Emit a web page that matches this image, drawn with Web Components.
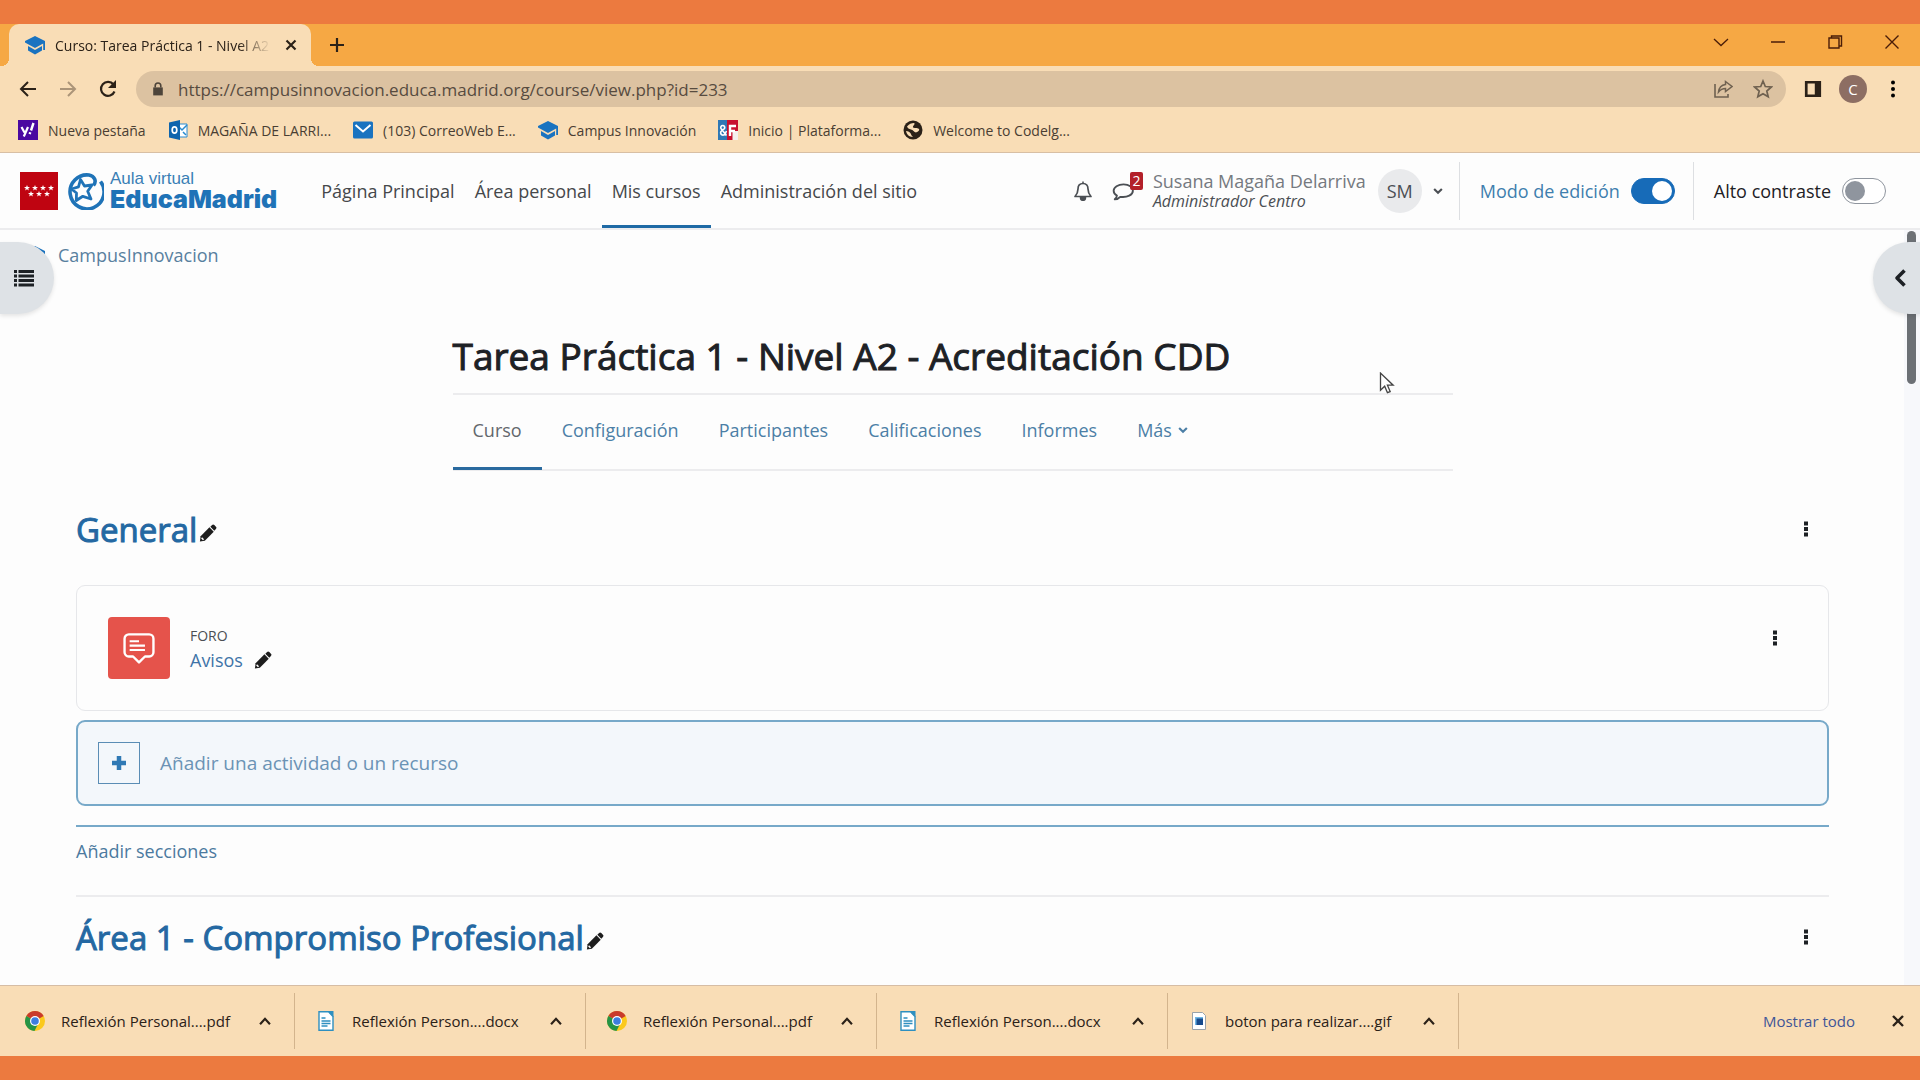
<!DOCTYPE html>
<html lang="es">
<head>
<meta charset="utf-8">
<title>Curso: Tarea Práctica 1 - Nivel A2</title>
<style>
  body {
    margin: 0;
    font-family: "Open Sans", "Noto Sans", sans-serif;
    font-size: 18px;
    color: #1d2125;
  }
</style>
</head>
<body>

<browser-window>
  <browser-tab slot="tabs">Curso: Tarea Práctica 1 - Nivel A2</browser-tab>

  <address-bar slot="toolbar" url="https://campusinnovacion.educa.madrid.org/course/view.php?id=233"></address-bar>

  <bookmark-link slot="bookmarks" icon="yahoo">Nueva pestaña</bookmark-link>
  <bookmark-link slot="bookmarks" icon="outlook">MAGAÑA DE LARRI...</bookmark-link>
  <bookmark-link slot="bookmarks" icon="mail">(103) CorreoWeb E...</bookmark-link>
  <bookmark-link slot="bookmarks" icon="cap">Campus Innovación</bookmark-link>
  <bookmark-link slot="bookmarks" icon="ef">Inicio | Plataforma...</bookmark-link>
  <bookmark-link slot="bookmarks" icon="globe">Welcome to Codelg...</bookmark-link>

  <site-header>
    <nav-link>Página Principal</nav-link>
    <nav-link>Área personal</nav-link>
    <nav-link active>Mis cursos</nav-link>
    <nav-link>Administración del sitio</nav-link>
    <user-menu slot="tools" initials="SM" unread="2">
      Susana Magaña Delarriva
      <span slot="role">Administrador Centro</span>
    </user-menu>
    <toggle-switch slot="tools" checked>Modo de edición</toggle-switch>
    <toggle-switch slot="tools">Alto contraste</toggle-switch>
  </site-header>

  <course-page>
    <course-header>
      Tarea Práctica 1 - Nivel A2 - Acreditación CDD
      <course-tab slot="tabs" active>Curso</course-tab>
      <course-tab slot="tabs">Configuración</course-tab>
      <course-tab slot="tabs">Participantes</course-tab>
      <course-tab slot="tabs">Calificaciones</course-tab>
      <course-tab slot="tabs">Informes</course-tab>
      <course-tab slot="tabs" more>Más</course-tab>
    </course-header>

    <course-section>
      <span slot="title">General</span>
      <activity-card type="Foro">Avisos</activity-card>
      <add-activity>Añadir una actividad o un recurso</add-activity>
      <add-sections>Añadir secciones</add-sections>
    </course-section>
    <course-section divided>
      <span slot="title">Área 1 - Compromiso Profesional</span>
    </course-section>
  </course-page>

  <download-item slot="downloads" icon="chrome">Reflexión Personal....pdf</download-item>
  <download-item slot="downloads" icon="doc">Reflexión Person....docx</download-item>
  <download-item slot="downloads" icon="chrome">Reflexión Personal....pdf</download-item>
  <download-item slot="downloads" icon="doc">Reflexión Person....docx</download-item>
  <download-item slot="downloads" icon="image">boton para realizar....gif</download-item>
</browser-window>

<script>
const icons = {
  cap: '<path fill="#1a73c0" d="M10 1 20 6v9h-1.800V8.500L10 13 0 7.500V6z"/><path fill="#1a73c0" d="M3 11l7 4 7-4v4.500L10 19.500 3 15.500z"/>',
  close: '<path d="M5 5 15 15M15 5 5 15" stroke="currentColor" stroke-width="2.400" fill="none"/>',
  plus: '<path d="M10 3V17M3 10H17" stroke="currentColor" stroke-width="2.200" fill="none"/>',
  thinDown: '<path d="M3 7l7 6.500L17 7" stroke="currentColor" stroke-width="1.300" fill="none"/>',
  minimize: '<path d="M3 10H17" stroke="currentColor" stroke-width="1.500" fill="none"/>',
  restore: '<path d="M4 6h10v10H4zM6.500 6V4H16.500V14H14" stroke="currentColor" stroke-width="1.400" fill="none"/>',
  thinClose: '<path d="M3.500 3.500 16.500 16.500M16.500 3.500 3.500 16.500" stroke="currentColor" stroke-width="1.400" fill="none"/>',
  back: '<path d="M18 10H3M10 3 3 10l7 7" stroke="currentColor" stroke-width="2" fill="none"/>',
  forward: '<path d="M2 10H17M10 3l7 7-7 7" stroke="currentColor" stroke-width="2" fill="none"/>',
  reload: '<path d="M16.500 12.500A7 7 0 1 1 15.500 5.500" stroke="currentColor" stroke-width="2.200" fill="none"/><path d="M18 1v8h-8z" fill="currentColor"/>',
  lock: '<path d="M4 8h12v10H4z" fill="currentColor"/><path d="M6.500 8V6a3.500 3.500 0 0 1 7 0v2" stroke="currentColor" stroke-width="2" fill="none"/>',
  share: '<path d="M2 5v13h13v-3" stroke="currentColor" stroke-width="1.600" fill="none"/><path d="M12.500 2.500 19 7.500l-6.500 5V9.500C9 9.500 7.500 10.500 5.500 13c.5-4 3-7 7-7.500z" stroke="currentColor" stroke-width="1.500" fill="none"/>',
  star: '<path d="M10 2l2.300 5.500 6 .5-4.500 4 1.400 5.800L10 14.700 4.800 17.800 6.200 12 1.700 8l6-.5z" stroke="currentColor" stroke-width="1.700" fill="none"/>',
  panel: '<path d="M1 1h18v18H1zM4 4v12h8V4z" fill="currentColor" fill-rule="evenodd"/>',
  dots: '<circle cx="10" cy="3.500" r="2"/><circle cx="10" cy="10" r="2"/><circle cx="10" cy="16.500" r="2"/>',
  kebab: '<path d="M8 2.500h4v4H8zM8 8h4v4H8zM8 13.500h4v4H8z" fill="currentColor"/>',
  yahoo: '<rect width="20" height="20" fill="#4b08a1"/><path d="M3.500 7 6.500 12.500M10 7 5.800 16.500" stroke="#fff" stroke-width="2.200" fill="none"/><path d="M15.500 3 13 10.500M12.200 12.300l-.5 1.800" stroke="#fff" stroke-width="2.400" fill="none"/>',
  outlook: '<path d="M9 4h10v13H9z" fill="#fff" stroke="#2a8bd0"/><path d="M10 6l4 4 5-5M15 12l3 3" stroke="#2a8bd0" stroke-width="1.500" fill="none"/><path d="M1 2.500 12 0v20L1 17.500z" fill="#0f64ad"/><ellipse cx="6.500" cy="10" rx="2.300" ry="3.200" fill="none" stroke="#fff" stroke-width="1.700"/>',
  mail: '<rect y="1.500" width="20" height="17" rx="1.500" fill="#1a73c0"/><path d="M2.500 5 10 11.500 17.500 5" stroke="#fff" stroke-width="2" fill="none"/>',
  ef: '<rect width="9" height="20" fill="#2f78b5"/><rect x="9" width="11" height="20" fill="#c8102e"/><path d="M14.500 11H20v9h-5.500z" fill="#f5f0ee"/><path d="M12 16V6h6M12 11h5" stroke="#fff" stroke-width="2.400" fill="none"/><path d="M8.500 15.500 3 8.500a2 2 0 1 1 3.500 0L3 11.500a2.200 2.200 0 0 0 4 2.500l1.500-3" stroke="#fff" stroke-width="1.600" fill="none"/>',
  globe: '<circle cx="10" cy="10" r="9.500" fill="#2b2118"/><path d="M4 6.500c2-2.500 4.500-3.500 7-3.500 2 1-1.500 2.500-1 4.500 1.500 1 4-.5 6 1.500 1 2-2 3-3 3.500-2-.5-3-2.500-5-3-2-.5-3.500-1.500-4-3z" fill="#f9ddb6"/><path d="M3 11c2 0 4 1 5 3 0 1 1 2 2 3-4 0-6.500-3-7-6z" fill="#f9ddb6"/>',
  chrome: '<circle cx="10" cy="10" r="10" fill="#fbc91d"/><path d="M10 10 1.340 5A10 10 0 0 1 18.660 5z" fill="#c93a2c"/><path d="M1.340 5A10 10 0 0 0 9.500 20L13.500 12 10 10z" fill="#269447"/><circle cx="10" cy="10" r="5" fill="#fff"/><circle cx="10" cy="10" r="3.800" fill="#3d7de0"/>',
  doc: '<path d="M3 .7h9.500L17 5.500V19.300H3z" fill="#fff" stroke="#2e8fc0" stroke-width="1.400"/><path d="M12 0h5.500v6z" fill="#2e8fc0"/><path d="M5.500 7h4M5.500 10h9M5.500 12.500h9M5.500 15h6" stroke="#2e8fc0" stroke-width="1.500"/>',
  image: '<path d="M3.500 1.500h10l3 3V18.500h-13z" fill="#fff" stroke="#9aa3aa"/><path d="M6 6h8v8H6z" fill="#6fb6e6"/><path d="M7.500 7.500H14V14H7.500z" fill="#174a8c"/>',
  bell: '<path d="M10 2.500c-3.500 0-5 2.500-5 5.500 0 4-1.300 5.500-3 7.500h16c-1.700-2-3-3.500-3-7.500 0-3-1.500-5.500-5-5.500z" stroke="currentColor" stroke-width="1.700" stroke-linejoin="round" fill="none"/><path d="M10 .5v2M7.500 16.500a2.500 2.800 0 0 0 5 0z" stroke="currentColor" stroke-width="1.500" fill="currentColor"/>',
  chat: '<path d="M10.500 4C5.500 4 1.500 6.500 1.500 9.800c0 1.800 1.200 3.400 3 4.400-.3 1.400-1 2.400-2 3.300 2 0 3.800-.8 5-2.200 6.500.9 11.500-1.800 11.500-5.500C19 6.500 15.500 4 10.500 4z" stroke="currentColor" stroke-width="1.700" stroke-linejoin="round" fill="none"/>',
  down: '<path d="M4.500 7 10 12.500 15.500 7" stroke="currentColor" stroke-width="3" fill="none"/>',
  up: '<path d="M4.500 13.500 10 7.500l5.500 6" stroke="currentColor" stroke-width="2.400" fill="none"/>',
  left: '<path d="M14.500 2.500 7 10l7.500 7.500" stroke="currentColor" stroke-width="3.600" stroke-linejoin="round" fill="none"/>',
  list: '<path d="M0 2h3v3H0zM0 6.500h3v3H0zM0 11h3v3H0zM0 15.500h3v3H0zM4.500 2H20v3H4.500zM4.500 6.500H20v3H4.500zM4.500 11H20v3H4.500zM4.500 15.500H20v3H4.500z" fill="currentColor"/>',
  pencil: '<path d="M14.500 1.200a1.800 1.800 0 0 1 2.500 0l1.800 1.800a1.800 1.800 0 0 1 0 2.500L17 7.500 12.600 3z" fill="currentColor"/><path d="M11.600 3.700l4.800 4.800L6.500 18.700 1 19.500 1.800 13.700z" fill="currentColor"/><path d="M3.400 14.800l2.200 2.200-1.200 1-2-2z" fill="#fff"/>',
  cross: '<path d="M10 3V17M3 10H17" stroke="currentColor" stroke-width="4.500" fill="none"/>',
  forum: '<path d="M4 2h12a2.500 2.500 0 0 1 2.500 2.500v8A2.500 2.500 0 0 1 16 15h-2.500L10 18.500 6.500 15H4a2.500 2.500 0 0 1-2.500-2.500v-8A2.500 2.500 0 0 1 4 2z" stroke="currentColor" stroke-width="1.400" stroke-linejoin="round" fill="none"/><path d="M4.500 6h5.500M4.500 8.600h9M4.500 11.200h9" stroke="currentColor" stroke-width="1.200"/>',
  pointer: '<path d="M5 1v15.500l3.800-3.600 2.500 5.900 2.500-1-2.500-5.800h5.200z" fill="#fff" stroke="#444" stroke-width="1.200"/>'
};

// shared by every component that draws inline icons
function icon(name, size = 20) {
  return `<svg class="icon" width="${size}" height="${size}" viewBox="0 0 20 20" aria-hidden="true">${icons[name]}</svg>`;
}

const base = `
  :host, *, *::before, *::after { box-sizing: border-box; }
  .icon { display: block; flex: none; }
  button {
    display: flex;
    align-items: center;
    justify-content: center;
    border: none;
    background: none;
    padding: 0;
    margin: 0;
    font: inherit;
    color: inherit;
  }
  a { color: inherit; text-decoration: none; }
`;

class BaseElement extends HTMLElement {
  constructor() {
    super();
    const template = document.createElement('template');
    template.innerHTML = `<style>${base}${this.styles()}</style>${this.markup()}`;
    this.attachShadow({ mode: 'open' }).appendChild(template.content.cloneNode(true));
  }
  styles() { return ''; }
  markup() { return '<slot></slot>'; }
}

class BrowserWindow extends BaseElement {
  styles() {
    return `
      :host {
        display: flex;
        flex-direction: column;
        height: 100vh;
        padding: 24px 0;
        background: #ec7a3f;
        overflow: hidden;
      }
      .strip, .bookmarks, .downloads {
        display: flex;
        align-items: center;
        flex: none;
        color: #2b2118;
      }
      .strip { height: 42px; padding-left: 9px; background: #f6a844; }
      .new { width: 52px; }
      .controls { display: flex; align-self: flex-start; margin-left: auto; height: 36px; }
      .controls button { width: 57px; color: #4a1d08; }
      .bookmarks {
        height: 41px;
        padding: 0 18px 4px;
        gap: 22px;
        background: #f9ddb6;
        border-bottom: 1px solid #d8bfa4;
      }
      .view { display: flex; flex-direction: column; flex: 1; min-height: 0; background: #fdfdfd; }
      .downloads {
        height: 71px;
        padding-left: 4px;
        background: #f9ddb6;
        border-top: 1px solid #d6bda5;
      }
      .all { margin-left: auto; font-size: 15px; color: #3f5596; }
      .dismiss { width: 45px; margin-left: 20px; }
    `;
  }
  markup() {
    return `
      <div class="strip">
        <slot name="tabs"></slot>
        <button class="new" aria-label="Nueva pestaña">${icon('plus')}</button>
        <div class="controls">
          <button aria-label="Buscar pestañas">${icon('thinDown')}</button>
          <button aria-label="Minimizar">${icon('minimize')}</button>
          <button aria-label="Restaurar">${icon('restore')}</button>
          <button aria-label="Cerrar">${icon('thinClose')}</button>
        </div>
      </div>
      <slot name="toolbar"></slot>
      <div class="bookmarks"><slot name="bookmarks"></slot></div>
      <div class="view"><slot></slot></div>
      <div class="downloads">
        <slot name="downloads"></slot>
        <button class="all">Mostrar todo</button>
        <button class="dismiss" aria-label="Cerrar barra">${icon('close')}</button>
      </div>
    `;
  }
}

class BrowserTab extends BaseElement {
  styles() {
    return `
      :host {
        display: flex;
        align-items: center;
        align-self: stretch;
        position: relative;
        gap: 10px;
        width: 302px;
        padding: 0 10px 0 16px;
        border-radius: 10px 10px 0 0;
        background: #f9ddb6;
        font-size: 14px;
      }
      /* flared feet of the tab */
      :host::before, :host::after {
        content: "";
        position: absolute;
        bottom: 0;
        width: 8px;
        height: 8px;
      }
      :host::before { right: 100%; background: radial-gradient(circle at 0 0, transparent 8px, #f9ddb6 8px); }
      :host::after { left: 100%; background: radial-gradient(circle at 100% 0, transparent 8px, #f9ddb6 8px); }
      .title {
        flex: 1;
        overflow: hidden;
        white-space: nowrap;
        -webkit-mask-image: linear-gradient(to right, #000 85%, transparent);
        mask-image: linear-gradient(to right, #000 85%, transparent);
      }
      button { width: 20px; height: 20px; }
    `;
  }
  markup() {
    return `
      ${icon('cap')}
      <span class="title"><slot></slot></span>
      <button aria-label="Cerrar pestaña">${icon('close', 18)}</button>
    `;
  }
}

class AddressBar extends BaseElement {
  styles() {
    return `
      :host {
        display: flex;
        align-items: center;
        flex: none;
        height: 46px;
        padding: 0 7px 0 8px;
        background: #f9ddb6;
        color: #2b2118;
      }
      button { width: 40px; height: 36px; }
      .forward { color: #ab9478; }
      .box {
        display: flex;
        align-items: center;
        flex: 1;
        height: 36px;
        margin: 0 7px 0 8px;
        padding: 0 3px 0 14px;
        border-radius: 18px;
        background: #dcc2a1;
        color: #6f6150;
      }
      .lock { color: #4d443a; }
      input {
        flex: 1;
        border: none;
        outline: none;
        background: none;
        padding: 0 0 0 12px;
        font: inherit;
        font-size: 17px;
        color: #574b3f;
      }
      .profile span {
        display: grid;
        place-items: center;
        width: 28px;
        height: 28px;
        border-radius: 50%;
        background: #8d6e63;
        color: #fff;
        font-size: 15px;
      }
    `;
  }
  markup() {
    return `
      <button aria-label="Atrás">${icon('back')}</button>
      <button class="forward" aria-label="Adelante">${icon('forward')}</button>
      <button aria-label="Recargar">${icon('reload')}</button>
      <div class="box">
        <span class="lock">${icon('lock', 16)}</span>
        <input type="text" aria-label="Dirección" spellcheck="false">
        <button aria-label="Compartir">${icon('share')}</button>
        <button aria-label="Favorito">${icon('star')}</button>
      </div>
      <button aria-label="Panel lateral">${icon('panel', 18)}</button>
      <button class="profile" aria-label="Perfil"><span>C</span></button>
      <button aria-label="Menú">${icon('dots')}</button>
    `;
  }
  connectedCallback() {
    this.shadowRoot.querySelector('input').value = this.getAttribute('url');
  }
}

class BookmarkLink extends BaseElement {
  styles() {
    return `
      :host { display: block; font-size: 14px; color: #4a3e33; }
      a { display: flex; align-items: center; gap: 10px; white-space: nowrap; }
    `;
  }
  markup() {
    return `<a href="#"><span class="mark"></span><slot></slot></a>`;
  }
  connectedCallback() {
    this.shadowRoot.querySelector('.mark').innerHTML = icon(this.getAttribute('icon'));
  }
}

class DownloadItem extends BaseElement {
  styles() {
    return `
      :host {
        display: flex;
        align-items: center;
        flex: 0 1 291px;
        height: 56px;
        padding: 0 20px 0 21px;
        border-right: 1px solid #d3b48d;
        font-size: 15px;
      }
      .name { flex: 1; margin-left: 16px; justify-content: flex-start; white-space: nowrap; }
    `;
  }
  markup() {
    return `
      <span class="mark"></span>
      <button class="name"><slot></slot></button>
      <button aria-label="Opciones">${icon('up', 18)}</button>
    `;
  }
  connectedCallback() {
    this.shadowRoot.querySelector('.mark').innerHTML = icon(this.getAttribute('icon'));
  }
}

class SiteHeader extends BaseElement {
  styles() {
    return `
      :host {
        display: flex;
        flex: none;
        height: 77px;
        padding: 0 34px 0 20px;
        border-bottom: 2px solid #ececee;
      }
      .brand { display: flex; align-items: center; gap: 6px; margin-right: 34px; }
      .brand svg { display: block; }
      .words {
        display: flex;
        flex-direction: column;
        padding-bottom: 3px;
        font-family: "Liberation Sans", Arial, sans-serif;
        font-size: 17px;
        line-height: 21px;
        color: #3a7fb5;
      }
      .words strong { font-family: Inter, sans-serif; font-size: 25px; font-weight: 900; color: #1f73b7; }
      nav, .tools { display: flex; }
      .tools { margin-left: auto; align-items: center; }
    `;
  }
  markup() {
    const star = (x, y) => `<path transform="translate(${x} ${y})" d="M0-3 .8-.9 3-.9 1.200.5 1.900 2.600 0 1.300-1.900 2.600-1.200.5-3-.9-.8-.9z"/>`;
    return `
      <a class="brand" href="#">
        <svg width="38" height="38" viewBox="0 0 38 38">
          <rect width="38" height="38" fill="#bf0411"/>
          <g fill="#fff">${[7, 15, 23, 31].map(x => star(x, 16)).join('')}${[11, 19, 27].map(x => star(x, 22)).join('')}</g>
        </svg>
        <svg width="40" height="38" viewBox="0 0 40 38" fill="none" stroke="#1f73b7">
          <path d="M36.500 9.500A17 17 0 1 1 25 3C30.500 4 33 9 29.500 13.500" stroke-width="3.600"/>
          <path d="M16.500 7.500 20.500 14l7.500-1-4.300 6.300L27 27l-8.200-2.700L12.300 28.500l.2-7.500L7.500 17l7-2.200z" stroke-width="2.800" stroke-linejoin="round"/>
        </svg>
        <span class="words"><span>Aula virtual</span><strong>EducaMadrid</strong></span>
      </a>
      <nav><slot></slot></nav>
      <div class="tools"><slot name="tools"></slot></div>
    `;
  }
}

class NavLink extends BaseElement {
  styles() {
    return `
      :host { display: flex; color: #45484b; white-space: nowrap; }
      a { display: flex; align-items: center; padding: 3px 10px 0; border-bottom: 3px solid transparent; }
      :host([active]) a { border-color: #1f6aa5; }
    `;
  }
  markup() { return '<a href="#"><slot></slot></a>'; }
}

class UserMenu extends BaseElement {
  styles() {
    return `
      :host { display: flex; align-items: center; color: #4b4f54; }
      .tool { position: relative; width: 40px; height: 40px; }
      .badge {
        position: absolute;
        top: 1px;
        right: 0;
        width: 13px;
        border-radius: 2px;
        background: #b3202a;
        color: #fff;
        font-size: 14px;
        line-height: 18px;
      }
      .names { display: flex; flex-direction: column; margin: 0 12px 0 10px; color: #75797f; line-height: 20px; white-space: nowrap; }
      .names i { font-size: 16px; color: #4b4f54; }
      .avatar {
        display: grid;
        place-items: center;
        width: 44px;
        height: 44px;
        border-radius: 50%;
        background: #e9eaec;
        color: #4b4f54;
      }
      .more { width: 32px; }
    `;
  }
  markup() {
    return `
      <button class="tool" aria-label="Notificaciones">${icon('bell')}</button>
      <button class="tool" aria-label="Mensajes">${icon('chat', 22)}<span class="badge"></span></button>
      <span class="names"><span><slot></slot></span><i><slot name="role"></slot></i></span>
      <span class="avatar"></span>
      <button class="more" aria-label="Menú de usuario">${icon('down', 14)}</button>
    `;
  }
  connectedCallback() {
    this.shadowRoot.querySelector('.avatar').textContent = this.getAttribute('initials');
    this.shadowRoot.querySelector('.badge').textContent = this.getAttribute('unread');
  }
}

class ToggleSwitch extends BaseElement {
  styles() {
    return `
      :host {
        display: flex;
        align-items: center;
        height: 58px;
        margin-left: 18px;
        border-left: 1px solid #dddfe2;
        color: #1d2125;
      }
      :host([checked]) { margin-left: 5px; color: #3f7fae; }
      label { display: flex; align-items: center; gap: 11px; padding-left: 20px; white-space: nowrap; }
      input {
        appearance: none;
        width: 44px;
        height: 26px;
        margin: 0;
        padding: 2px;
        border: 1px solid #8f959e;
        border-radius: 13px;
        background: #fff;
      }
      input::before {
        content: "";
        display: block;
        width: 20px;
        height: 20px;
        border-radius: 50%;
        background: #8f959e;
      }
      input:checked { background: #176bb8; border-color: #176bb8; }
      input:checked::before { margin-left: 18px; background: #fff; }
    `;
  }
  markup() {
    return '<label><slot></slot><input type="checkbox" role="switch"></label>';
  }
  connectedCallback() {
    this.shadowRoot.querySelector('input').checked = this.hasAttribute('checked');
  }
}

class CoursePage extends BaseElement {
  styles() {
    return `
      :host { display: block; position: relative; flex: 1; min-height: 0; overflow: hidden; }
      main { display: block; margin-right: 16px; padding: 12px 75px 0 76px; }
      .crumb { display: flex; align-items: center; gap: 13px; margin-left: -51px; line-height: 26px; color: #58809f; }
      .drawer {
        position: absolute;
        top: 12px;
        height: 72px;
        background: #dee2e6;
        color: #1d2125;
        box-shadow: 0 2px 4px rgba(0, 0, 0, 0.1);
      }
      .index { left: 0; width: 54px; padding-right: 6px; border-radius: 0 36px 36px 0; }
      .blocks { right: 0; width: 47px; padding-left: 6px; border-radius: 36px 0 0 36px; }
      .track { position: absolute; top: 0; right: 0; bottom: 0; width: 16px; padding: 1px 3px; background: #f7f8fb; }
      .thumb { height: 153px; border-radius: 5px; background: #6c7075; margin-right: 1px; }
      .cursor { position: absolute; top: 142px; left: 1375px; }
    `;
  }
  markup() {
    return `
      <main>
        <a class="crumb" href="#">${icon('cap')}CampusInnovacion</a>
        <slot></slot>
      </main>
      <div class="track"><div class="thumb"></div></div>
      <button class="drawer index" aria-label="Índice del curso">${icon('list')}</button>
      <button class="drawer blocks" aria-label="Abrir bloques">${icon('left')}</button>
      <span class="cursor">${icon('pointer', 22)}</span>
    `;
  }
}

class CourseHeader extends BaseElement {
  styles() {
    return `
      :host { display: block; max-width: 1000px; margin: 60px auto 0; }
      h1 {
        margin: 0;
        padding-bottom: 9px;
        font-size: 37px;
        line-height: 56px;
        font-weight: 500;
        white-space: nowrap;
        border-bottom: 2px solid #ececee;
        -webkit-text-stroke: 1px currentColor;
      }
      nav { display: flex; height: 76px; border-bottom: 2px solid #ececee; }
    `;
  }
  markup() {
    return '<h1><slot></slot></h1><nav><slot name="tabs"></slot></nav>';
  }
}

class CourseTab extends BaseElement {
  styles() {
    return `
      :host { display: flex; height: 75px; color: #4c7fa6; }
      a { display: flex; align-items: center; gap: 4px; padding: 0 20px 3px; border-bottom: 3px solid transparent; }
      .icon { display: none; }
      :host([more]) .icon { display: block; }
      :host([active]) { color: #63676c; }
      :host([active]) a { border-color: #2a6a9f; }
    `;
  }
  markup() { return `<a href="#"><slot></slot>${icon('down', 14)}</a>`; }
}

class CourseSection extends BaseElement {
  styles() {
    return `
      :host { display: block; padding-top: 32px; }
      :host([divided]) { margin-top: 31px; padding-top: 14px; border-top: 2px solid #ececee; }
      .head { display: flex; align-items: center; height: 52px; margin-bottom: 30px; padding-right: 13px; }
      h2 {
        display: flex;
        align-items: center;
        gap: 2px;
        margin: 0;
        font-size: 33px;
        font-weight: 500;
        color: #2468a2;
        white-space: nowrap;
        -webkit-text-stroke: 1px currentColor;
      }
      h2 button { margin-top: 8px; color: #1d1d1d; }
      .menu { margin-left: auto; }
    `;
  }
  markup() {
    return `
      <div class="head">
        <h2><slot name="title"></slot><button aria-label="Editar nombre">${icon('pencil', 18)}</button></h2>
        <button class="menu" aria-label="Editar sección">${icon('kebab')}</button>
      </div>
      <slot></slot>
    `;
  }
}

class ActivityCard extends BaseElement {
  styles() {
    return `
      :host {
        display: flex;
        align-items: center;
        gap: 20px;
        height: 126px;
        padding: 0 43px 0 31px;
        border: 1px solid #e6e7ea;
        border-radius: 9px;
      }
      .type {
        display: grid;
        place-items: center;
        width: 62px;
        height: 62px;
        border-radius: 4px;
        background: #e5534b;
        color: #fff;
      }
      .text { line-height: 24px; color: #3f74a8; }
      small { display: block; font-size: 14px; text-transform: uppercase; color: #4b4f54; }
      .name { display: flex; align-items: center; gap: 11px; }
      .name button { color: #1d1d1d; }
      .menu { margin: 0 0 20px auto; }
    `;
  }
  markup() {
    return `
      <span class="type">${icon('forum', 34)}</span>
      <div class="text">
        <small></small>
        <div class="name"><a href="#"><slot></slot></a><button aria-label="Editar título">${icon('pencil', 18)}</button></div>
      </div>
      <button class="menu" aria-label="Editar actividad">${icon('kebab')}</button>
    `;
  }
  connectedCallback() {
    this.shadowRoot.querySelector('small').textContent = this.getAttribute('type');
  }
}

class AddActivity extends BaseElement {
  styles() {
    return `
      :host { display: block; margin-top: 9px; }
      .add {
        justify-content: flex-start;
        gap: 20px;
        width: 100%;
        height: 86px;
        padding: 0 20px;
        border: 2px solid #77a9c9;
        border-radius: 9px;
        background: #f3f7fb;
        color: #6b93b5;
        font-size: 19px;
      }
      .box { display: grid; place-items: center; width: 42px; height: 42px; border: 1px solid #5a8db5; color: #2f79b5; }
    `;
  }
  markup() {
    return `<button class="add"><span class="box">${icon('cross')}</span><slot></slot></button>`;
  }
}

class AddSections extends BaseElement {
  styles() {
    return `
      :host { display: block; margin-top: 19px; padding-top: 11px; border-top: 2px solid #77a9c9; color: #4c7a9f; line-height: 26px; }
    `;
  }
  markup() { return '<a href="#"><slot></slot></a>'; }
}

customElements.define('browser-window', BrowserWindow);
customElements.define('browser-tab', BrowserTab);
customElements.define('address-bar', AddressBar);
customElements.define('bookmark-link', BookmarkLink);
customElements.define('download-item', DownloadItem);
customElements.define('site-header', SiteHeader);
customElements.define('nav-link', NavLink);
customElements.define('user-menu', UserMenu);
customElements.define('toggle-switch', ToggleSwitch);
customElements.define('course-page', CoursePage);
customElements.define('course-header', CourseHeader);
customElements.define('course-tab', CourseTab);
customElements.define('course-section', CourseSection);
customElements.define('activity-card', ActivityCard);
customElements.define('add-activity', AddActivity);
customElements.define('add-sections', AddSections);
</script>
</body>
</html>
